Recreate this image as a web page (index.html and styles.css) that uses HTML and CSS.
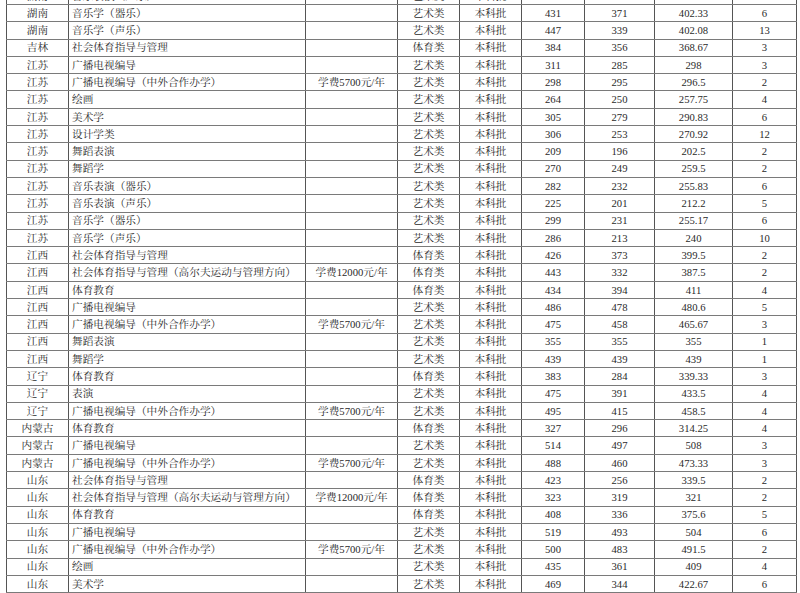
FILE: index.html
```html
<!DOCTYPE html>
<html lang="zh-CN">
<head>
<meta charset="utf-8">
<title>录取分数</title>
<link rel="stylesheet" href="styles.css">
</head>
<body>
<table class="score-table">
<colgroup>
<col class="c-prov"><col class="c-major"><col class="c-note"><col class="c-cat"><col class="c-batch"><col class="c-max"><col class="c-min"><col class="c-avg"><col class="c-num">
</colgroup>
<tbody>
<tr><td>湖南</td><td class="major">音乐表演（声乐）</td><td></td><td>艺术类</td><td>本科批</td><td>441</td><td>369</td><td>400.8</td><td>11</td></tr>
<tr><td>湖南</td><td class="major">音乐学（器乐）</td><td></td><td>艺术类</td><td>本科批</td><td>431</td><td>371</td><td>402.33</td><td>6</td></tr>
<tr><td>湖南</td><td class="major">音乐学（声乐）</td><td></td><td>艺术类</td><td>本科批</td><td>447</td><td>339</td><td>402.08</td><td>13</td></tr>
<tr><td>吉林</td><td class="major">社会体育指导与管理</td><td></td><td>体育类</td><td>本科批</td><td>384</td><td>356</td><td>368.67</td><td>3</td></tr>
<tr><td>江苏</td><td class="major">广播电视编导</td><td></td><td>艺术类</td><td>本科批</td><td>311</td><td>285</td><td>298</td><td>3</td></tr>
<tr><td>江苏</td><td class="major">广播电视编导（中外合作办学）</td><td>学费5700元/年</td><td>艺术类</td><td>本科批</td><td>298</td><td>295</td><td>296.5</td><td>2</td></tr>
<tr><td>江苏</td><td class="major">绘画</td><td></td><td>艺术类</td><td>本科批</td><td>264</td><td>250</td><td>257.75</td><td>4</td></tr>
<tr><td>江苏</td><td class="major">美术学</td><td></td><td>艺术类</td><td>本科批</td><td>305</td><td>279</td><td>290.83</td><td>6</td></tr>
<tr><td>江苏</td><td class="major">设计学类</td><td></td><td>艺术类</td><td>本科批</td><td>306</td><td>253</td><td>270.92</td><td>12</td></tr>
<tr><td>江苏</td><td class="major">舞蹈表演</td><td></td><td>艺术类</td><td>本科批</td><td>209</td><td>196</td><td>202.5</td><td>2</td></tr>
<tr><td>江苏</td><td class="major">舞蹈学</td><td></td><td>艺术类</td><td>本科批</td><td>270</td><td>249</td><td>259.5</td><td>2</td></tr>
<tr><td>江苏</td><td class="major">音乐表演（器乐）</td><td></td><td>艺术类</td><td>本科批</td><td>282</td><td>232</td><td>255.83</td><td>6</td></tr>
<tr><td>江苏</td><td class="major">音乐表演（声乐）</td><td></td><td>艺术类</td><td>本科批</td><td>225</td><td>201</td><td>212.2</td><td>5</td></tr>
<tr><td>江苏</td><td class="major">音乐学（器乐）</td><td></td><td>艺术类</td><td>本科批</td><td>299</td><td>231</td><td>255.17</td><td>6</td></tr>
<tr><td>江苏</td><td class="major">音乐学（声乐）</td><td></td><td>艺术类</td><td>本科批</td><td>286</td><td>213</td><td>240</td><td>10</td></tr>
<tr><td>江西</td><td class="major">社会体育指导与管理</td><td></td><td>体育类</td><td>本科批</td><td>426</td><td>373</td><td>399.5</td><td>2</td></tr>
<tr><td>江西</td><td class="major">社会体育指导与管理（高尔夫运动与管理方向）</td><td>学费12000元/年</td><td>体育类</td><td>本科批</td><td>443</td><td>332</td><td>387.5</td><td>2</td></tr>
<tr><td>江西</td><td class="major">体育教育</td><td></td><td>体育类</td><td>本科批</td><td>434</td><td>394</td><td>411</td><td>4</td></tr>
<tr><td>江西</td><td class="major">广播电视编导</td><td></td><td>艺术类</td><td>本科批</td><td>486</td><td>478</td><td>480.6</td><td>5</td></tr>
<tr><td>江西</td><td class="major">广播电视编导（中外合作办学）</td><td>学费5700元/年</td><td>艺术类</td><td>本科批</td><td>475</td><td>458</td><td>465.67</td><td>3</td></tr>
<tr><td>江西</td><td class="major">舞蹈表演</td><td></td><td>艺术类</td><td>本科批</td><td>355</td><td>355</td><td>355</td><td>1</td></tr>
<tr><td>江西</td><td class="major">舞蹈学</td><td></td><td>艺术类</td><td>本科批</td><td>439</td><td>439</td><td>439</td><td>1</td></tr>
<tr><td>辽宁</td><td class="major">体育教育</td><td></td><td>体育类</td><td>本科批</td><td>383</td><td>284</td><td>339.33</td><td>3</td></tr>
<tr><td>辽宁</td><td class="major">表演</td><td></td><td>艺术类</td><td>本科批</td><td>475</td><td>391</td><td>433.5</td><td>4</td></tr>
<tr><td>辽宁</td><td class="major">广播电视编导（中外合作办学）</td><td>学费5700元/年</td><td>艺术类</td><td>本科批</td><td>495</td><td>415</td><td>458.5</td><td>4</td></tr>
<tr><td>内蒙古</td><td class="major">体育教育</td><td></td><td>体育类</td><td>本科批</td><td>327</td><td>296</td><td>314.25</td><td>4</td></tr>
<tr><td>内蒙古</td><td class="major">广播电视编导</td><td></td><td>艺术类</td><td>本科批</td><td>514</td><td>497</td><td>508</td><td>3</td></tr>
<tr><td>内蒙古</td><td class="major">广播电视编导（中外合作办学）</td><td>学费5700元/年</td><td>艺术类</td><td>本科批</td><td>488</td><td>460</td><td>473.33</td><td>3</td></tr>
<tr><td>山东</td><td class="major">社会体育指导与管理</td><td></td><td>体育类</td><td>本科批</td><td>423</td><td>256</td><td>339.5</td><td>2</td></tr>
<tr><td>山东</td><td class="major">社会体育指导与管理（高尔夫运动与管理方向）</td><td>学费12000元/年</td><td>体育类</td><td>本科批</td><td>323</td><td>319</td><td>321</td><td>2</td></tr>
<tr><td>山东</td><td class="major">体育教育</td><td></td><td>体育类</td><td>本科批</td><td>408</td><td>336</td><td>375.6</td><td>5</td></tr>
<tr><td>山东</td><td class="major">广播电视编导</td><td></td><td>艺术类</td><td>本科批</td><td>519</td><td>493</td><td>504</td><td>6</td></tr>
<tr><td>山东</td><td class="major">广播电视编导（中外合作办学）</td><td>学费5700元/年</td><td>艺术类</td><td>本科批</td><td>500</td><td>483</td><td>491.5</td><td>2</td></tr>
<tr><td>山东</td><td class="major">绘画</td><td></td><td>艺术类</td><td>本科批</td><td>435</td><td>361</td><td>409</td><td>4</td></tr>
<tr><td>山东</td><td class="major">美术学</td><td></td><td>艺术类</td><td>本科批</td><td>469</td><td>344</td><td>422.67</td><td>6</td></tr>
</tbody>
</table>
</body>
</html>
```
FILE: styles.css
```css
html, body {
  margin: 0;
  padding: 0;
  background: #ffffff;
  overflow: hidden;
}
body {
  font-family: "Liberation Serif", "Noto Serif CJK SC", "Noto Sans CJK SC", serif;
  font-size: 10.67px;
  color: #2a2a2a;
}
.score-table {
  border-collapse: collapse;
  table-layout: fixed;
  width: 790px;
  margin: -13.3px 0 0 6px;
}
.score-table td {
  height: 16.3px;
  padding: 0;
  border: 1px solid #555;
  border-top-color: #7a7a7a;
  border-bottom-color: #7a7a7a;
  text-align: center;
  vertical-align: middle;
  white-space: nowrap;
  overflow: hidden;
  line-height: 1;
}
.score-table td.major {
  text-align: left;
  padding-left: 3px;
}
.c-prov { width: 62px; }
.c-major { width: 237px; }
.c-note { width: 92px; }
.c-cat { width: 62px; }
.c-batch { width: 62px; }
.c-max { width: 63px; }
.c-min { width: 70px; }
.c-avg { width: 78px; }
.c-num { width: 64px; }
```
